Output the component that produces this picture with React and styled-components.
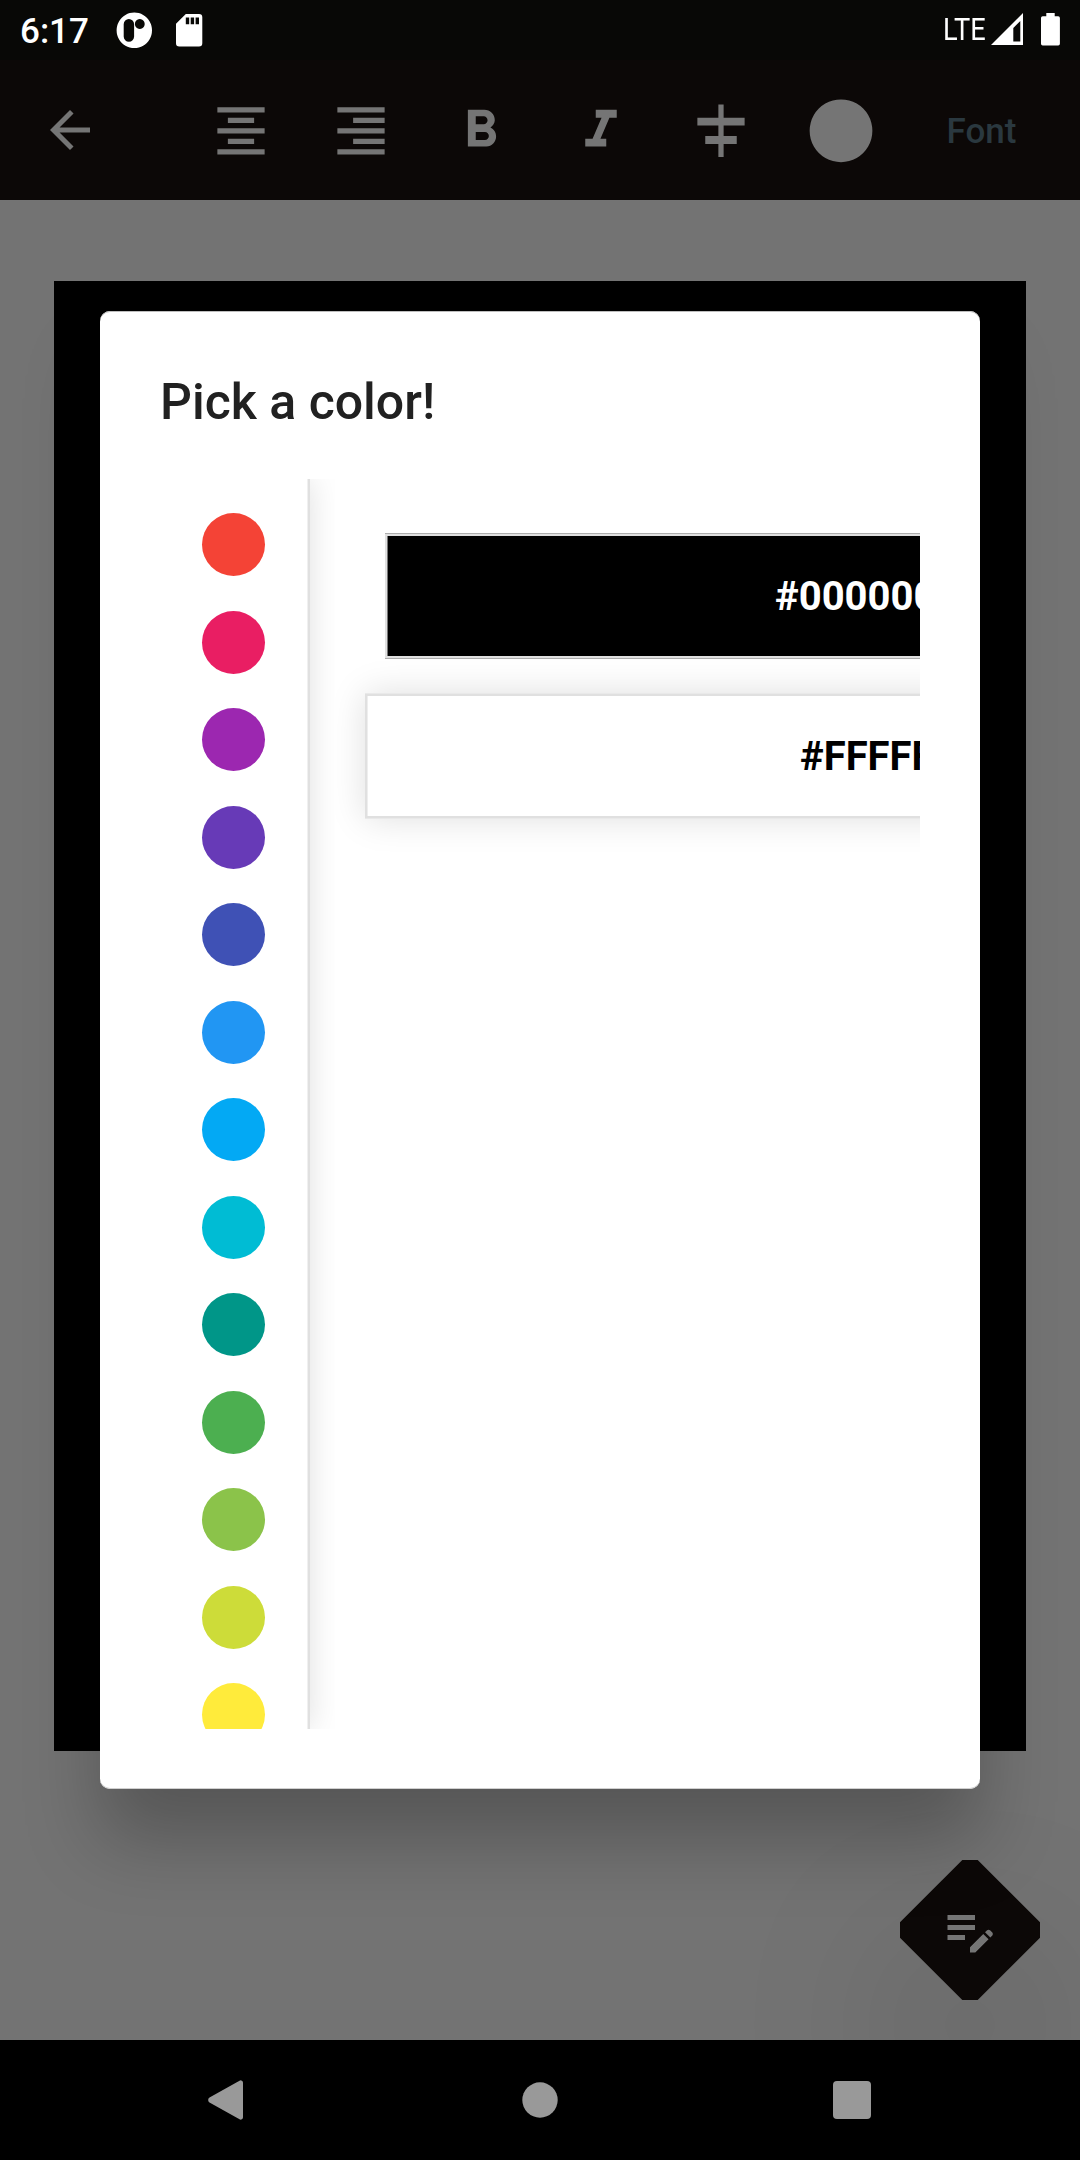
import React from "react";
import styled, { createGlobalStyle } from "styled-components";

const GlobalStyle = createGlobalStyle`
  * { box-sizing: border-box; }
  body {
    margin: 0;
    background: #737373;
    font-family: Roboto, "Liberation Sans", sans-serif;
  }
`;

const Screen = styled.div`
  position: relative;
  display: flex;
  flex-direction: column;
  width: 1080px;
  height: 2160px;
  overflow: hidden;
  background: #737373;
`;

const StatusBar = styled.header`
  display: flex;
  align-items: center;
  flex: none;
  height: 60px;
  padding: 0 20px;
  background: #080806;
  color: #fff;
`;

const Clock = styled.span`
  width: 95px;
  padding-top: 3px;
  font-size: 35px;
  font-weight: 500;
  line-height: 40px;
`;

const StatusIcon = styled.svg`
  flex: none;
  width: ${(p) => p.$w}px;
  height: 60px;
  margin-left: ${(p) => p.$gap || 0}px;
  fill: #fff;
`;

const Network = styled.span`
  width: 47px;
  margin-left: auto;
  padding-bottom: 2px;
  font-size: 32px;
  line-height: 40px;
  white-space: nowrap;
  transform: scaleX(0.85);
  transform-origin: left center;
`;

const Toolbar = styled.nav`
  display: flex;
  align-items: center;
  flex: none;
  height: 140px;
  padding-left: 40px;
  background: #0c0807;
`;

const ToolGroup = styled.div`
  display: flex;
  margin-left: 81px;
  padding-top: 2px;
`;

const ToolButton = styled.button`
  display: flex;
  align-items: center;
  justify-content: center;
  width: 120px;
  height: 120px;
  padding: 0;
  border: 0;
  background: none;
`;

const Icon = styled.svg`
  display: block;
  width: ${(p) => p.$size}px;
  height: ${(p) => p.$size}px;
  fill: #757575;
`;

const FontButton = styled.button`
  width: 161px;
  padding: 3px 0 0;
  border: 0;
  background: none;
  color: #2a383f;
  font: 500 35px/40px Roboto, "Liberation Sans", sans-serif;
`;

const Workspace = styled.main`
  flex: 1;
  padding: 81px 54px 0;
`;

const Canvas = styled.div`
  height: 1470px;
  background: #000;
`;

const Fab = styled.button`
  position: absolute;
  left: 900px;
  top: 1860px;
  padding: 0;
  border: 0;
  background: none;
  filter: drop-shadow(0 95px 85px rgba(0, 0, 0, 0.2));
`;

const FabShape = styled.span`
  display: flex;
  align-items: center;
  justify-content: center;
  width: 140px;
  height: 140px;
  background: #0c0807;
  clip-path: polygon(62.3px 0, 77.7px 0, 140px 62.3px, 140px 77.7px, 77.7px 140px, 62.3px 140px, 0 77.7px, 0 62.3px);
`;

const NavBar = styled.footer`
  position: relative;
  display: flex;
  flex: none;
  justify-content: space-between;
  align-items: center;
  height: 120px;
  padding: 0 198px;
  background: #000;
`;

const NavIcon = styled.svg`
  width: 60px;
  height: 60px;
  fill: #999;
`;

const Dialog = styled.section`
  position: absolute;
  left: 100px;
  top: 311px;
  width: 880px;
  height: 1478px;
  padding: 61px 60px 60px;
  border-radius: 10px;
  background: #fff;
  box-shadow: inset 0 1px 0 #bdbdbd, inset 0 -1px 0 #cfcfcf, 0 50px 75px rgba(0, 0, 0, 0.25);
`;

const Title = styled.h2`
  margin: 0 0 47px;
  color: #212121;
  font-size: 50px;
  font-weight: 500;
  line-height: 60px;
`;

const Picker = styled.div`
  display: flex;
  width: 760px;
  height: 1250px;
  overflow: hidden;
`;

const Palette = styled.div`
  display: flex;
  flex: none;
  flex-direction: column;
  align-items: center;
  gap: 34.5px;
  width: 150px;
  padding: 34px 3px 0 0;
  background: linear-gradient(to right, transparent 147px, #f0f0f0 147px, #f0f0f0 148px, #e0e0e0 148px) #fff;
  box-shadow: 0 0 30px rgba(0, 0, 0, 0.13);
`;

const Swatch = styled.span`
  flex: none;
  width: 63px;
  height: 63px;
  border-radius: 50%;
  background: ${(p) => p.$color};
`;

const Shades = styled.div`
  position: relative;
  flex: 1;
  display: flex;
  flex-direction: column;
  gap: 34px;
  margin-left: 25px;
  padding-top: 54px;
  overflow: hidden;
  background: #fff;
`;

const Shade = styled.div`
  display: flex;
  align-items: center;
  flex: none;
  width: 1000px;
  height: 126px;
  margin-left: ${(p) => (p.$selected ? 30 : 50)}px;
  padding-top: 2px;
  padding-left: ${(p) => (p.$selected ? 435 : 390)}px;
  border: solid ${(p) => p.$edge};
  border-width: 1px 0;
  background: ${(p) => p.$color};
  color: ${(p) => p.$ink};
  box-shadow: inset 2px 2px 0 #e0e0e0, inset 0 -2px 0 #e0e0e0, inset 3px 0 0 ${(p) => p.$inner}
    ${(p) => (p.$selected ? ", 0 0 34px rgba(0, 0, 0, 0.13)" : "")};
  font-size: 40px;
  font-weight: 700;
  line-height: 48px;
  white-space: nowrap;
`;

const COLORS = [
  "#f44336", "#e91e63", "#9c27b0", "#673ab7", "#3f51b5", "#2196f3", "#03a9f4",
  "#00bcd4", "#009688", "#4caf50", "#8bc34a", "#cddc39", "#ffeb3b",
];

const TOOLS = [
  { name: "Align center", d: "M7 15v2h10v-2H7zm-4 6h18v-2H3v2zm0-8h18v-2H3v2zm4-6v2h10V7H7zM3 3v2h18V3H3z" },
  { name: "Align right", d: "M3 21h18v-2H3v2zm6-4h12v-2H9v2zm-6-4h18v-2H3v2zm6-4h12V7H9v2zM3 3v2h18V3H3z" },
  { name: "Bold", d: "M15.6 10.79c.97-.67 1.65-1.77 1.65-2.79 0-2.26-1.75-4-4-4H7v14h7.04c2.09 0 3.71-1.7 3.71-3.79 0-1.52-.86-2.82-2.15-3.42zM10 6.5h3c.83 0 1.5.67 1.5 1.5s-.67 1.5-1.5 1.5h-3v-3zm3.5 9H10v-3h3.5c.83 0 1.5.67 1.5 1.5s-.67 1.5-1.5 1.5z" },
  { name: "Italic", d: "M10 4v3h2.21l-3.42 8H6v3h8v-3h-2.21l3.42-8H18V4z" },
  { name: "Align middle", d: "M11 2h2v5h8v3h-8v4h5v3h-5v5h-2v-5H6v-3h5v-4H3V7h8z" },
  { name: "Color", d: "M12 .05a11.95 11.95 0 1 0 .01 0z" },
];

export default function App() {
  return (
    <>
      <GlobalStyle />
      <Screen>
        <StatusBar>
          <Clock>6:17</Clock>
          <StatusIcon $w={38} viewBox="0 0 38 60">
            <path
              fillRule="evenodd"
              d="M19.3 12.5a17.7 17.8 0 1 0 .01 0zM13.9 19a5.2 5.2 0 0 1 5.2 5.2v12.4a5.2 5.2 0 0 1-10.4 0V24.2a5.2 5.2 0 0 1 5.2-5.2zM24.8 19.1a4.9 4.9 0 1 1-.01 0z"
            />
          </StatusIcon>
          <StatusIcon $w={30} $gap={21} viewBox="0 0 30 60">
            <path
              fillRule="evenodd"
              d="M11.8 14h13.2a3.3 3.3 0 0 1 3.3 3.3v26a3.3 3.3 0 0 1-3.3 3.3H5.3a3.3 3.3 0 0 1-3.3-3.3V23.8zM11.8 17.5v6.7h3.4v-6.7zM16.7 17.5v6.7h3.4v-6.7zM21.6 17.5v6.7h3.4v-6.7z"
            />
          </StatusIcon>
          <Network>LTE</Network>
          <StatusIcon $w={34} viewBox="0 0 34 60">
            <path fillRule="evenodd" d="M33 13v32H1zM30.3 21l-7 7V41.500h7z" />
          </StatusIcon>
          <StatusIcon $w={20} $gap={16} viewBox="0 0 20 60">
            <path d="M6.3 13h8.4v3.3h3.5a1.7 1.7 0 0 1 1.7 1.7v25.7a1.7 1.7 0 0 1-1.7 1.7H2.7A1.7 1.7 0 0 1 1 43.7V18a1.7 1.7 0 0 1 1.7-1.7h3.6z" />
          </StatusIcon>
        </StatusBar>

        <Toolbar>
          <Icon $size={60} viewBox="0 0 24 24">
            <path d="M20 11H7.83l5.59-5.59L12 4l-8 8 8 8 1.41-1.41L7.83 13H20v-2z" />
          </Icon>
          <ToolGroup>
            {TOOLS.map((t) => (
              <ToolButton key={t.name} aria-label={t.name}>
                <Icon $size={64} viewBox="-0.19 -0.1 24.381 24.381">
                  <path d={t.d} />
                </Icon>
              </ToolButton>
            ))}
          </ToolGroup>
          <FontButton>Font</FontButton>
        </Toolbar>

        <Workspace>
          <Canvas />
        </Workspace>

        <Fab aria-label="Edit">
          <FabShape>
            <Icon $size={60} viewBox="0 0 24 24">
              <path d="M3 10h11v2H3v-2zm0-2h11V6H3v2zm0 8h7v-2H3v2zm15.01-3.13l.71-.71c.39-.39 1.02-.39 1.41 0l.71.71c.39.39.39 1.02 0 1.41l-.71.71-2.12-2.12zm-.71.71l-5.3 5.3V21h2.12l5.3-5.3-2.12-2.12z" />
            </Icon>
          </FabShape>
        </Fab>

        <NavBar>
          <NavIcon viewBox="0 0 60 60">
            <path d="M11.5 27.5 41.5 10.7a2.3 2.3 0 0 1 3.5 2v34.6a2.3 2.3 0 0 1-3.5 2L11.5 32.5a3 3 0 0 1 0-5z" />
          </NavIcon>
          <NavIcon viewBox="0 0 60 60">
            <circle cx="30" cy="30" r="17.7" />
          </NavIcon>
          <NavIcon viewBox="0 0 60 60">
            <rect x="11" y="11" width="38" height="38" rx="4" />
          </NavIcon>
        </NavBar>

        <Dialog>
          <Title>Pick a color!</Title>
          <Picker>
            <Palette>
              {COLORS.map((c) => (
                <Swatch key={c} $color={c} />
              ))}
            </Palette>
            <Shades>
              <Shade $color="#000" $ink="#fff" $edge="#adadad" $inner="#757575">#000000</Shade>
              <Shade $selected $color="#fff" $ink="#000" $edge="#e9e9e9" $inner="#eee">#FFFFFF</Shade>
            </Shades>
          </Picker>
        </Dialog>
      </Screen>
    </>
  );
}
